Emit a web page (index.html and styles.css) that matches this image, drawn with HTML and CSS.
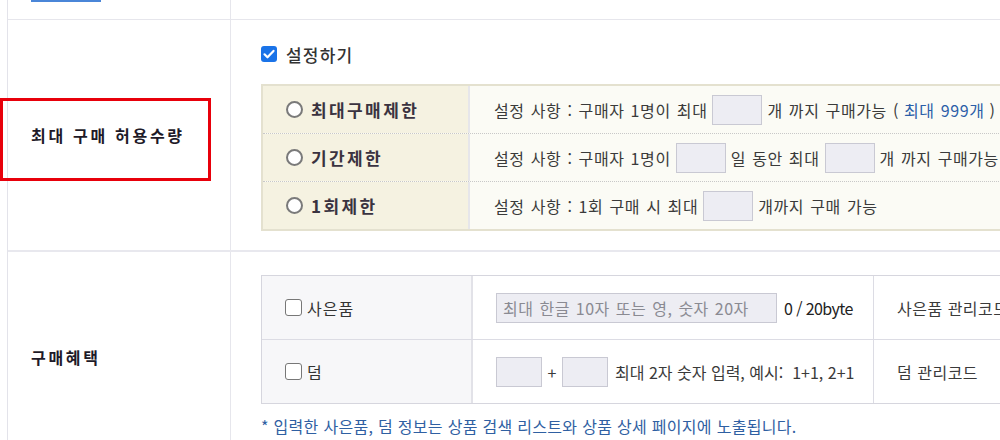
FILE: index.html
```html
<!DOCTYPE html>
<html lang="ko">
<head>
    <meta charset="UTF-8">
    <meta name="viewport" content="width=device-width, initial-scale=1.0">
    <title>구매 설정</title>
    <link rel="stylesheet" href="styles.css">
</head>
<body>
    <div class="form">
        <div class="row row-top">
            <div class="label"><span class="tab-bar"></span></div>
            <div class="field"></div>
        </div>

        <div class="row row-limit">
            <div class="label">최대 구매 허용수량</div>
            <div class="field">
                <div class="check-line">
                    <span class="check on">
                        <svg viewBox="0 0 16 16" width="16" height="16"><path d="M3.5 8.3l3 3 6-6.4" fill="none" stroke="#fff" stroke-width="2.2" stroke-linecap="round" stroke-linejoin="round"/></svg>
                    </span>
                    설정하기
                </div>
                <div class="limit-table">
                    <div class="limit-row">
                        <div class="limit-name"><span class="radio"></span>최대구매제한</div>
                        <div class="limit-desc">설정 사항 : 구매자 1명이 최대 <span class="box"></span> 개 까지 구매가능 (<span class="blue">최대 999개</span>)</div>
                    </div>
                    <div class="limit-row">
                        <div class="limit-name"><span class="radio"></span>기간제한</div>
                        <div class="limit-desc">설정 사항 : 구매자 1명이 <span class="box"></span> 일 동안 최대 <span class="box"></span> 개 까지 구매가능</div>
                    </div>
                    <div class="limit-row">
                        <div class="limit-name"><span class="radio"></span>1회제한</div>
                        <div class="limit-desc">설정 사항 : 1회 구매 시 최대 <span class="box"></span> 개까지 구매 가능</div>
                    </div>
                </div>
            </div>
            <div class="highlight"></div>
        </div>

        <div class="row row-benefit">
            <div class="label">구매혜택</div>
            <div class="field">
                <div class="benefit-table">
                    <div class="benefit-row">
                        <div class="benefit-name"><span class="check"></span>사은품</div>
                        <div class="benefit-input">
                            <span class="text-box">최대 한글 10자 또는 영, 숫자 20자</span>
                            <span class="counter">0 / 20byte</span>
                        </div>
                        <div class="benefit-code">사은품 관리코드</div>
                    </div>
                    <div class="benefit-row">
                        <div class="benefit-name"><span class="check"></span>덤</div>
                        <div class="benefit-input">
                            <span class="box small"></span>
                            <span class="plus">+</span>
                            <span class="box small"></span>
                            <span class="hint">최대 2자 숫자 입력, 예시:&nbsp; 1+1, 2+1</span>
                        </div>
                        <div class="benefit-code">덤 관리코드</div>
                    </div>
                </div>
                <p class="note">* 입력한 사은품, 덤 정보는 상품 검색 리스트와 상품 상세 페이지에 노출됩니다.</p>
            </div>
        </div>
    </div>
</body>
</html>
```

FILE: styles.css
```css
body {
    margin: 0;
    overflow: hidden;
    background-color: #fff;
    font-family: "Noto Sans CJK KR", "Noto Sans", sans-serif;
    color: #3a3a3a;
}

.form {
    width: 1200px;
    margin-left: 7px;
    border-left: 1px solid #e3e3ea;
}

.row {
    position: relative;
    display: flex;
    border-bottom: 1px solid #e6e6ec;
}

.label {
    display: flex;
    align-items: center;
    width: 223px;
    flex-shrink: 0;
    box-sizing: border-box;
    padding-left: 23px;
    border-right: 1px solid #e6e6ec;
    font-size: 16px;
    font-weight: bold;
    letter-spacing: 2.7px;
    color: #1e1a28;
}

.field {
    flex: 1;
    padding-left: 30px;
}

/* top strip */
.row-top {
    height: 19px;
}

.row-top .label {
    align-items: flex-start;
}

.tab-bar {
    display: block;
    width: 70px;
    height: 2px;
    background-color: #4a86d8;
}

/* max purchase */
.row-limit {
    height: 230px;
    border-bottom: 2px solid #e8e8ee;
}

.row-limit .field {
    padding-top: 25px;
}

.check-line {
    display: flex;
    align-items: center;
    gap: 9px;
    height: 18px;
    font-size: 17px;
    font-weight: 500;
    letter-spacing: 1.2px;
    color: #333;
}

.check {
    display: inline-block;
    flex-shrink: 0;
    width: 17px;
    height: 17px;
    box-sizing: border-box;
    border: 1.5px solid #777;
    border-radius: 3px;
    background-color: #fff;
}

.check.on {
    width: 16px;
    height: 16px;
    border: none;
    background-color: #1a73e8;
}

.check svg {
    display: block;
}

.limit-table {
    width: 780px;
    margin-top: 21px;
    border: 2px solid #e4e1cf;
    background-color: #fbfbf5;
}

.limit-row {
    display: flex;
    height: 47px;
    border-bottom: 1px dotted #c8c8c8;
}

.limit-row:last-child {
    border-bottom: none;
}

.limit-name {
    display: flex;
    align-items: center;
    gap: 8px;
    width: 207px;
    box-sizing: border-box;
    padding-left: 23px;
    background-color: #f5f2e1;
    border-right: 2px solid #e6e6ea;
    font-size: 17px;
    font-weight: bold;
    color: #3a3340;
    letter-spacing: 2.4px;
}

.radio {
    flex-shrink: 0;
    width: 17px;
    height: 17px;
    box-sizing: border-box;
    border: 2px solid #7a7a7a;
    border-radius: 50%;
    background-color: #fff;
}

.limit-desc {
    display: flex;
    align-items: center;
    gap: 5px;
    padding-left: 24px;
    font-size: 16px;
    letter-spacing: 0.6px;
    word-spacing: 1px;
    white-space: nowrap;
}

.box {
    display: inline-block;
    width: 50px;
    height: 30px;
    box-sizing: border-box;
    border: 1px solid #c9c9d3;
    background-color: #ededf3;
}

.blue {
    color: #2b5ea8;
}

.highlight {
    position: absolute;
    left: -8px;
    top: 78px;
    width: 211px;
    height: 83px;
    box-sizing: border-box;
    border: 3px solid #e8000b;
}

/* benefit */
.row-benefit {
    height: 210px;
    border-bottom: none;
}

.row-benefit .field {
    padding-top: 23px;
}

.benefit-table {
    width: 780px;
    border: 1px solid #d6d6de;
}

.benefit-row {
    display: flex;
    height: 63px;
    border-bottom: 1px solid #dcdce4;
}

.benefit-row:last-child {
    border-bottom: none;
}

.benefit-name {
    display: flex;
    align-items: center;
    gap: 5px;
    width: 211px;
    box-sizing: border-box;
    padding-left: 23px;
    background-color: #f7f7f9;
    border-right: 2px solid #e2e2e8;
    font-size: 16px;
    letter-spacing: 1px;
    color: #333;
}

.benefit-input {
    display: flex;
    align-items: center;
    width: 401px;
    box-sizing: border-box;
    padding-left: 23px;
    border-right: 1px solid #dcdce4;
    font-size: 16px;
    color: #3a3a3a;
    white-space: nowrap;
}

.text-box {
    display: flex;
    align-items: center;
    width: 281px;
    height: 30px;
    box-sizing: border-box;
    padding-left: 6px;
    border: 1px solid #c9c9d3;
    background-color: #ededf3;
    color: #8a8a92;
    letter-spacing: 0.5px;
    word-spacing: 1px;
}

.counter {
    margin-left: 7px;
    letter-spacing: -0.6px;
    color: #222;
}

.box.small {
    width: 46px;
}

.plus {
    width: 20px;
    text-align: center;
}

.hint {
    margin-left: 7px;
}

.benefit-code {
    display: flex;
    align-items: center;
    padding-left: 23px;
    font-size: 16px;
    letter-spacing: 0.5px;
    color: #3a3a3a;
    white-space: nowrap;
}

.note {
    margin: 10px 0 0;
    font-size: 16px;
    letter-spacing: 0.3px;
    color: #2f60a2;
}
```
